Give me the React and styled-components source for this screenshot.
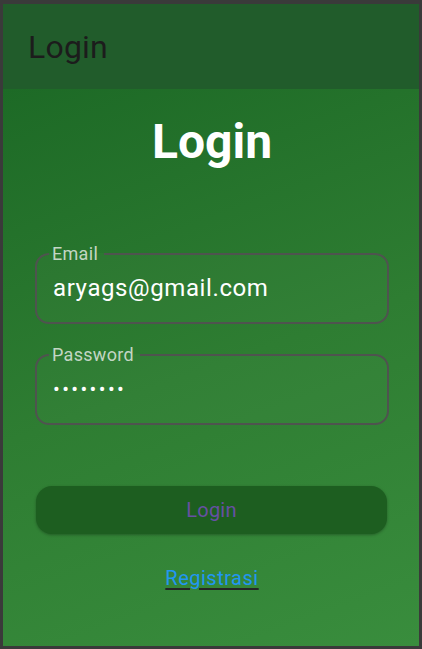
import styled, { createGlobalStyle } from "styled-components";

const GlobalStyle = createGlobalStyle`
	html, body {
		margin: 0;
		padding: 0;
		background: #3a3a3a;
	}
	body {
		font-family: Roboto, "Liberation Sans", sans-serif;
	}
`;

function App() {
	return (
		<>
			<GlobalStyle />
			<Frame>
				<AppBar>
					<AppBarTitle>Login</AppBarTitle>
				</AppBar>

				<Body>
					<Heading>Login</Heading>

					<Field>
						<Label>Email</Label>
						<Input readOnly value="aryags@gmail.com" />
					</Field>

					<Field $gap>
						<Label>Password</Label>
						<Input readOnly value="••••••••" $secret />
					</Field>

					<LoginButton type="button">Login</LoginButton>

					<LinkRow>
						<RegisterLink href="#">Registrasi</RegisterLink>
					</LinkRow>
				</Body>
			</Frame>
		</>
	);
}

export default App;

const Frame = styled.div`
	display: flex;
	flex-direction: column;
	height: 642px;
	margin: 4px 3px 3px 3px;
	overflow: hidden;
`;

const AppBar = styled.header`
	display: flex;
	align-items: center;
	height: 85px;
	padding-left: 25px;
	background-color: #215c2b;
`;

const AppBarTitle = styled.h1`
	margin: 0;
	font-size: 32px;
	font-weight: 400;
	letter-spacing: 0.2px;
	color: #1c1c1c;
`;

const Body = styled.main`
	flex: 1;
	display: flex;
	flex-direction: column;
	padding: 25px 30px 0 32px;
	background: linear-gradient(160deg, #1d6a26 0%, #2e7d32 50%, #398d3d 100%);
`;

const Heading = styled.h2`
	margin: 0;
	text-align: center;
	font-size: 48px;
	line-height: 56px;
	font-weight: 700;
	color: #ffffff;
`;

const Field = styled.fieldset`
	margin: ${(p) => (p.$gap ? "20px" : "73px")} 0 0 0;
	padding: 10px 16px 20px 16px;
	border: 2px solid #4f534f;
	border-radius: 14px;
	background-color: rgba(255, 255, 255, 0.025);
`;

const Label = styled.legend`
	margin-left: -4px;
	padding: 0 6px 0 3px;
	font-size: 18px;
	line-height: 21px;
	letter-spacing: 0.3px;
	color: #c3d6c4;
`;

const Input = styled.input`
	display: block;
	width: 100%;
	margin: 0;
	padding: 0;
	border: none;
	outline: none;
	background: transparent;
	font-family: Roboto, "Liberation Sans", sans-serif;
	font-size: ${(p) => (p.$secret ? "20px" : "24px")};
	line-height: 28px;
	height: 28px;
	letter-spacing: ${(p) => (p.$secret ? "2.4px" : "0.6px")};
	color: #ffffff;
`;

const LoginButton = styled.button`
	margin: 61px 2px 0 1px;
	height: 48px;
	border: none;
	border-radius: 16px;
	background-color: #1d5e20;
	box-shadow: 0 1px 3px rgba(0, 0, 0, 0.3);
	font-family: Roboto, "Liberation Sans", sans-serif;
	font-size: 20px;
	letter-spacing: 0.2px;
	color: #6750a4;
	cursor: pointer;
`;

const LinkRow = styled.div`
	display: flex;
	justify-content: center;
	margin-top: 32px;
`;

const RegisterLink = styled.a`
	font-size: 20px;
	line-height: 24px;
	letter-spacing: 0.5px;
	color: #2196f3;
	text-decoration: underline;
	text-decoration-color: #262626;
	text-decoration-thickness: 1.5px;
	text-underline-offset: 3px;
`;
